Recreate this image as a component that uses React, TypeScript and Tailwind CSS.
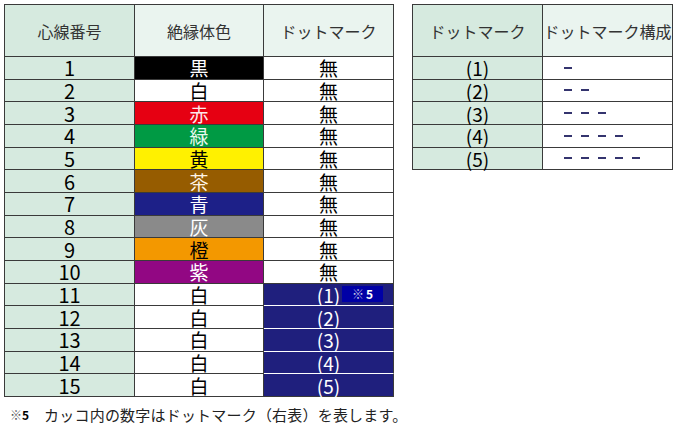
import React from "react";

const font = { fontFamily: '"Noto Sans CJK JP", "Noto Sans", sans-serif' };

type Row = { n: number; color: string; bg: string; fg: string; mark: string };

const rows: Row[] = [
  { n: 1, color: "黒", bg: "bg-[#000000]", fg: "text-white", mark: "無" },
  { n: 2, color: "白", bg: "bg-white", fg: "text-black", mark: "無" },
  { n: 3, color: "赤", bg: "bg-[#e60012]", fg: "text-[#fde8ea]", mark: "無" },
  { n: 4, color: "緑", bg: "bg-[#009a44]", fg: "text-[#e8f8ee]", mark: "無" },
  { n: 5, color: "黄", bg: "bg-[#fff100]", fg: "text-black", mark: "無" },
  { n: 6, color: "茶", bg: "bg-[#965c00]", fg: "text-[#fff4e6]", mark: "無" },
  { n: 7, color: "青", bg: "bg-[#1d2088]", fg: "text-white", mark: "無" },
  { n: 8, color: "灰", bg: "bg-[#8a8a8a]", fg: "text-white", mark: "無" },
  { n: 9, color: "橙", bg: "bg-[#f39800]", fg: "text-black", mark: "無" },
  { n: 10, color: "紫", bg: "bg-[#920783]", fg: "text-white", mark: "無" },
  { n: 11, color: "白", bg: "bg-white", fg: "text-black", mark: "(1)" },
  { n: 12, color: "白", bg: "bg-white", fg: "text-black", mark: "(2)" },
  { n: 13, color: "白", bg: "bg-white", fg: "text-black", mark: "(3)" },
  { n: 14, color: "白", bg: "bg-white", fg: "text-black", mark: "(4)" },
  { n: 15, color: "白", bg: "bg-white", fg: "text-black", mark: "(5)" },
];

function Dashes({ count }: { count: number }) {
  return (
    <div className="flex items-center gap-[9px] pl-[21px]">
      {Array.from({ length: count }).map((_, i) => (
        <span key={i} className="block w-[8px] h-[2px] bg-[#34346e]" />
      ))}
    </div>
  );
}

export default function App() {
  return (
    <div className="w-[680px] h-[434px] bg-white relative" style={font}>
      <div className="flex items-start pt-[4px] pl-[4px] gap-[18px]">
        {/* Left table */}
        <div className="border-t border-l border-[#3a3a3a]">
          <div className="flex h-[52px]">
            <div className="w-[130px] border-r border-b border-[#3a3a3a] bg-[#d6eadf] flex items-center justify-center text-[16px] text-[#333]">
              心線番号
            </div>
            <div className="w-[129px] border-r border-b border-[#3a3a3a] bg-[#eaf4ef] flex items-center justify-center text-[16px] text-[#333]">
              絶縁体色
            </div>
            <div className="w-[130px] border-r border-b border-[#3a3a3a] bg-[#eaf4ef] flex items-center justify-center text-[16px] text-[#333]">
              ドットマーク
            </div>
          </div>
          {rows.map((r) => {
            const blue = r.n >= 11;
            const whiteBottom = r.n >= 11 && r.n <= 14;
            return (
              <div key={r.n} className="flex h-[22.67px] text-[19px] leading-[19px]">
                <div className="w-[130px] border-r border-b border-[#3a3a3a] bg-[#d6eadf] flex items-center justify-center text-black text-[20px]">
                  {r.n}
                </div>
                <div
                  className={`w-[129px] border-r border-b border-[#3a3a3a] ${r.bg} ${r.fg} flex items-center justify-center`}
                >
                  {r.color}
                </div>
                <div
                  className={
                    blue
                      ? `w-[130px] border-r border-b ${whiteBottom ? "border-b-white border-r-[#3a3a3a]" : "border-[#3a3a3a]"} bg-[#1f1f7d] text-white flex items-center justify-center relative`
                      : "w-[130px] border-r border-b border-[#3a3a3a] bg-white text-black flex items-center justify-center"
                  }
                >
                  {r.mark}
                  {r.n === 11 && (
                    <span className="absolute left-[78px] top-[2px] w-[41px] h-[16px] bg-[#0000a6] flex items-center justify-center text-[12px] leading-[16px] font-bold text-white">
                      <span className="text-[#c8c8e8] font-normal mr-[2px]">※</span>5
                    </span>
                  )}
                </div>
              </div>
            );
          })}
        </div>

        {/* Right table */}
        <div className="border-t border-l border-[#3a3a3a]">
          <div className="flex h-[52px]">
            <div className="w-[130px] border-r border-b border-[#3a3a3a] bg-[#d6eadf] flex items-center justify-center text-[16px] text-[#333]">
              ドットマーク
            </div>
            <div className="w-[130px] border-r border-b border-[#3a3a3a] bg-[#eaf4ef] flex items-center justify-center text-[16px] text-[#333] whitespace-nowrap">
              ドットマーク構成
            </div>
          </div>
          {[1, 2, 3, 4, 5].map((k) => (
            <div key={k} className="flex h-[22.67px] text-[19px] leading-[19px]">
              <div className="w-[130px] border-r border-b border-[#3a3a3a] bg-[#d6eadf] flex items-center justify-center text-black">
                ({k})
              </div>
              <div className="w-[130px] border-r border-b border-[#3a3a3a] bg-white flex items-center">
                <Dashes count={k} />
              </div>
            </div>
          ))}
        </div>
      </div>

      {/* Footnote */}
      <div className="flex items-center pl-[10px] mt-[8px] h-[20px]">
        <span className="text-[12px] leading-[14px] text-[#555]">※</span>
        <span className="text-[12px] leading-[14px] font-bold text-black">5</span>
        <span className="ml-[15px] text-[15px] leading-[20px] text-[#222] tracking-[0.2px]">
          カッコ内の数字はドットマーク（右表）を表します。
        </span>
      </div>
    </div>
  );
}
